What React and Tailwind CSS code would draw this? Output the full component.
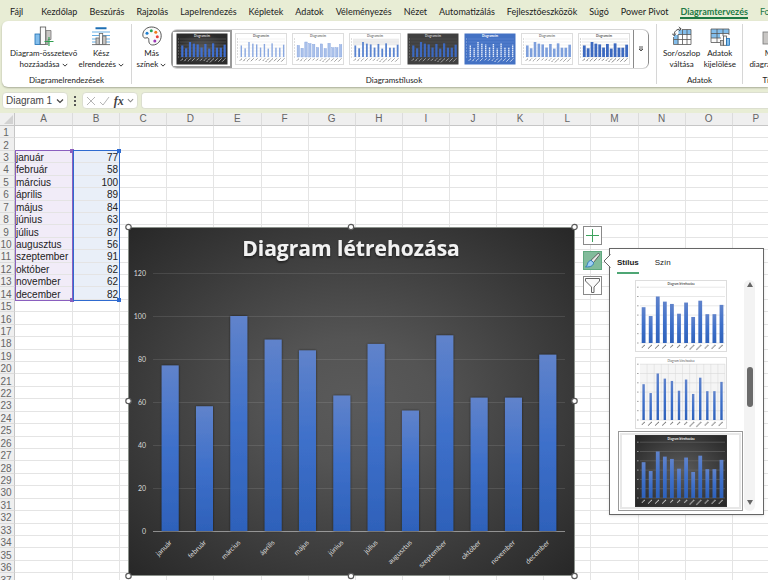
import React from 'react'
import { useState } from 'react'
import clsx from 'clsx'

const data = [
  ['január', 77],
  ['február', 58],
  ['március', 100],
  ['április', 89],
  ['május', 84],
  ['június', 63],
  ['július', 87],
  ['augusztus', 56],
  ['szeptember', 91],
  ['október', 62],
  ['november', 62],
  ['december', 82],
]

const tabs = [
  'Fájl',
  'Kezdőlap',
  'Beszúrás',
  'Rajzolás',
  'Lapelrendezés',
  'Képletek',
  'Adatok',
  'Véleményezés',
  'Nézet',
  'Automatizálás',
  'Fejlesztőeszközök',
  'Súgó',
  'Power Pivot',
  'Diagramtervezés',
  'Formátum',
]

const columns = 'ABCDEFGHIJKLMNOP'.split('')
const rows = Array.from({ length: 37 }, (_, i) => i + 1)

const Chevron = ({ className }) => (
  <svg viewBox="0 0 8 8" className={clsx('inline-block shrink-0', className)} fill="none" stroke="currentColor" strokeWidth="1.2">
    <path d="M1 2.5 4 5.5 7 2.5" />
  </svg>
)

/* ---------- ribbon icons ---------- */

const AddElementIcon = () => (
  <svg viewBox="0 0 20 20" className="w-5 h-5" fill="none">
    <rect x="1" y="8" width="5" height="10.5" fill="#83beec" stroke="#1e6fb4" strokeWidth=".8" />
    <rect x="6.3" y="1" width="5.4" height="17.5" fill="#fafafa" stroke="#555" strokeWidth=".8" />
    <path d="M12 4.5h5v9h-3v5h-2z" fill="#c8c6c4" stroke="#777" strokeWidth=".8" />
    <path d="M15 11v9M10.5 15.5h9" stroke="#2f9e4f" strokeWidth="1.1" />
  </svg>
)

const QuickLayoutIcon = () => (
  <svg viewBox="0 0 20 20" className="w-5 h-5" fill="none">
    <path d="M4.5 2.2h11" stroke="#1e6fb4" strokeWidth="2" />
    <path d="M1 6h18M1 9.5h18M1 13h18M1 16h18" stroke="#69afe5" strokeWidth="1" />
    <path d="M1 18.6h18" stroke="#555" strokeWidth=".8" />
    <rect x="5" y="12" width="3.3" height="6.5" fill="#c8c6c4" stroke="#666" strokeWidth=".8" />
    <rect x="8.3" y="7.5" width="3.4" height="11" fill="#fafafa" stroke="#666" strokeWidth=".8" />
    <rect x="11.7" y="10" width="3.3" height="8.5" fill="#c8c6c4" stroke="#666" strokeWidth=".8" />
  </svg>
)

const PaletteIcon = () => (
  <svg viewBox="0 0 20 20" className="w-5 h-5" fill="none">
    <path
      d="M9.5 1C4.5 1 .8 4.6.8 8.8c0 2.4 1.4 3.6 3 3.2 1.8-.6 3-.2 3 1.6 0 1.6-.2 5.4 4 5.4 4.8 0 8.4-4.2 8.4-9.2C19.2 4.6 15 1 9.5 1z"
      fill="#fafafa"
      stroke="#444"
      strokeWidth=".9"
    />
    <circle cx="5" cy="7.3" r="1.5" fill="#1e7fd0" />
    <circle cx="9.3" cy="4.8" r="1.5" fill="#23a455" />
    <circle cx="13.8" cy="6.3" r="1.5" fill="#f07c1c" />
    <circle cx="15.3" cy="10.8" r="1.5" fill="#e8413a" />
    <circle cx="12.8" cy="15" r="1.5" fill="#9b35b5" />
  </svg>
)

const SwitchIcon = () => (
  <svg viewBox="0 0 20 20" className="w-5 h-5" fill="none">
    <rect x="2" y="9" width="4.5" height="9" fill="#83beec" />
    <rect x="6.5" y="4" width="12.5" height="4.5" fill="#83beec" />
    <path d="M10 3.5h9v15H1.5V11M1.5 13.5H19M6 8.5v10M10.5 3.5v15M15 3.5v15M6 8.5h13" stroke="#555" strokeWidth=".8" />
    <path d="M2 9.5c0-4 2.5-6.5 7-6.5" stroke="#444" strokeWidth="1" />
    <path d="M7 .8 9.2 3 7 5.2M0 7.5 2 9.6 4.2 7.5" stroke="#444" strokeWidth="1" />
  </svg>
)

const SelectDataIcon = () => (
  <svg viewBox="0 0 20 20" className="w-5 h-5" fill="none">
    <rect x="1" y="3" width="18" height="13" fill="#fafafa" />
    <path d="M1 3h18v4.5H10V12H1z" fill="#83beec" />
    <path d="M10 16.5H1V3h18v6M1 7.5h18M1 12h10M7 3v13.5M13 3v7" stroke="#555" strokeWidth=".8" />
    <rect x="10.5" y="14.5" width="3" height="4.8" fill="#c8c6c4" stroke="#666" strokeWidth=".8" />
    <rect x="13.5" y="10" width="3" height="9.3" fill="#fafafa" stroke="#555" strokeWidth=".8" />
    <rect x="16.5" y="12.5" width="3" height="6.8" fill="#83beec" stroke="#1e6fb4" strokeWidth=".8" />
  </svg>
)

const ChartTypeIcon = () => (
  <svg viewBox="0 0 20 20" className="w-5 h-5" fill="none">
    <rect x="1" y="6" width="6" height="12" fill="#c8c6c4" stroke="#777" strokeWidth=".8" />
    <rect x="7" y="2" width="6" height="16" fill="#fafafa" stroke="#555" strokeWidth=".8" />
    <rect x="13" y="9" width="6" height="9" fill="#83beec" stroke="#1e6fb4" strokeWidth=".8" />
  </svg>
)

const RibbonButton = ({ icon, top, bottom, menu, className }) => (
  <button className={clsx('flex flex-col items-center whitespace-nowrap', className)}>
    {icon}
    <span className="mt-[2px] leading-[11px]">{top}</span>
    <span className="leading-[11px] flex items-center gap-[2px]">
      {bottom}
      {menu && <Chevron className="w-[6px] h-[6px]" />}
    </span>
  </button>
)

const GroupLabel = ({ children }) => (
  <span className="h-[13px] leading-3 text-center whitespace-nowrap">{children}</span>
)

/* ---------- small charts ---------- */

const looks = {
  dark: { bg: 'url(#thumbDark)', bar: '#3f6fd0', text: '#ddd', grid: '#666' },
  thin: { bg: '#fff', bar: '#8aa8e0', text: '#666', grid: '#e4e4e4', barWidth: 1.4 },
  pale: { bg: '#fff', bar: '#a9c0ea', text: '#777', grid: '#fff', barWidth: 2.4, stroke: '#7f9fdd' },
  band: { bg: '#fff', bar: '#5a84d0', text: '#777', grid: '#e0e0e0', barWidth: 1.8, band: true },
  flatDark: { bg: '#404040', bar: '#3c69c0', text: '#ccc', grid: '#555' },
  blue: { bg: '#4472c4', bar: '#e3ebfa', text: '#fff', grid: '#6a90d8', barWidth: 1.4, dash: true },
  soft: { bg: '#fff', bar: '#7d9fdc', text: '#777', grid: '#e4e4e4', barWidth: 2.6 },
  bold: { bg: '#fff', bar: '#3c69c0', text: '#555', grid: '#ccc', barWidth: 2.8 },
}

const StyleThumb = ({ look }) => {
  const l = looks[look]
  const w = l.barWidth || 2.2
  return (
    <svg viewBox="0 0 52 32" className="block w-[52px] h-8" fontFamily="Lato, sans-serif">
      <defs>
        <radialGradient id="thumbDark">
          <stop offset="0" stopColor="#595959" />
          <stop offset="1" stopColor="#2b2b2b" />
        </radialGradient>
      </defs>
      <rect x=".5" y=".5" width="51" height="31" fill={l.bg} stroke="#ddd" strokeWidth={l.bg === '#fff' ? 1 : 0} />
      <text x="26" y="4" fontSize="3" fontWeight="bold" textAnchor="middle" fill={l.text}>
        Diagramcím
      </text>
      {l.band && <rect x="4" y="6" width="46" height="6" fill="#eee" />}
      {[0, 1, 2, 3, 4, 5, 6].map((i) => (
        <g key={i}>
          <path d={`M4 ${6 + i * 3}h46`} stroke={l.grid} strokeWidth=".5" />
          <path d={`M2 ${6 + i * 3}h1`} stroke={l.text} strokeWidth=".8" opacity=".6" />
        </g>
      ))}
      {data.map(([name, value], i) => {
        const x = 6.3 + i * 3.85
        const h = value * 0.15
        return (
          <g key={name}>
            {l.dash ? (
              <path d={`M${x} 24v${-h}`} stroke={l.bar} strokeWidth={w} strokeDasharray="1.4 .6" />
            ) : (
              <rect x={x - w / 2} y={24 - h} width={w} height={h} fill={l.bar} stroke={l.stroke || 'none'} strokeWidth=".4" />
            )}
            <path
              d={`M${x + 0.7} 25.5l${-name.length / 2.6} ${name.length / 2.6}`}
              stroke={l.text}
              strokeWidth=".9"
              strokeDasharray="1 .2"
            />
          </g>
        )
      })}
    </svg>
  )
}

const PanelThumb = ({ variant }) => {
  const dark = variant === 'dark'
  const hatch = variant === 'hatch'
  const barWidth = hatch ? 2.4 : 3.8
  const ink = dark ? '#eee' : '#555'
  return (
    <svg viewBox="0 0 92 72" className="block w-[92px] h-[72px]" fontFamily="Lato, sans-serif">
      <defs>
        <radialGradient id="panelDark" r=".7">
          <stop offset="0" stopColor="#5c5c5c" />
          <stop offset="1" stopColor="#262626" />
        </radialGradient>
        <linearGradient id="panelBar" x1="0" y1="0" x2="0" y2="1">
          <stop offset="0" stopColor="#6083cb" />
          <stop offset=".5" stopColor="#3e70ca" />
          <stop offset="1" stopColor="#2e61ba" />
        </linearGradient>
        <pattern id="panelHatch" width="2" height="2" patternUnits="userSpaceOnUse">
          <path d="M0 0l2 2M2 0 0 2" stroke="#dcdcdc" strokeWidth=".3" />
        </pattern>
      </defs>
      <rect x=".5" y=".5" width="91" height="71" fill={dark ? 'url(#panelDark)' : '#fff'} stroke={dark ? '#333' : '#ddd'} />
      <text x="46" y="4.5" fontSize="3" fontWeight={hatch ? 'normal' : 'bold'} textAnchor="middle" fill={ink}>
        Diagram létrehozása
      </text>
      {hatch && <rect x="5" y="7" width="85" height="56" fill="url(#panelHatch)" />}
      {[0, 1, 2, 3, 4, 5, 6].map((i) => (
        <g key={i}>
          <path d={`M5 ${63 - i * 9.3}h85`} stroke={dark ? '#6a6a6a' : '#d9d9d9'} strokeWidth=".6" />
          <path d={`M2 ${63 - i * 9.3}h1.6`} stroke={ink} strokeWidth=".9" opacity=".6" />
        </g>
      ))}
      {data.map(([name, value], i) => {
        const x = 8.6 + i * 7.08
        const h = value * 0.465
        return (
          <g key={name}>
            {hatch && <path d={`M${x + 3.5} 7v56`} stroke="#d9d9d9" strokeWidth=".5" />}
            <rect x={x - barWidth / 2} y={63 - h} width={barWidth} height={h} fill="url(#panelBar)" />
            <path
              d={`M${x + 1} 65l${-name.length / 2} ${name.length / 2}`}
              stroke={ink}
              strokeWidth="1.2"
              strokeDasharray="1 .4"
              opacity=".8"
            />
          </g>
        )
      })}
    </svg>
  )
}

/* ---------- main chart ---------- */

const handles = [
  [3.5, 3],
  [226, 3],
  [449.5, 3],
  [3.5, 177],
  [449.5, 177],
  [3.5, 352],
  [226, 352],
  [449.5, 352],
]

const Chart = () => {
  const pitch = 34.33
  return (
    <svg
      viewBox="0 0 452 354"
      className="absolute left-[125px] top-[111px] w-[452px] h-[354px] overflow-visible"
      fontFamily="Lato, sans-serif"
    >
      <defs>
        <radialGradient id="chartBg" cx=".5" cy=".5" r=".72">
          <stop offset="0" stopColor="#5a5a5a" />
          <stop offset=".25" stopColor="#545454" />
          <stop offset="1" stopColor="#262626" />
        </radialGradient>
        <linearGradient id="barFill" x1="0" y1="0" x2="0" y2="1">
          <stop offset="0" stopColor="#6083cb" />
          <stop offset=".5" stopColor="#3e70ca" />
          <stop offset="1" stopColor="#2e61ba" />
        </linearGradient>
        <filter id="barShadow" x="-30%" y="-5%" width="160%" height="110%">
          <feDropShadow dx="0" dy="0" stdDeviation="1.2" floodColor="#000" floodOpacity=".65" />
        </filter>
        <filter id="titleShadow">
          <feDropShadow dx="0" dy="1.5" stdDeviation="1" floodColor="#000" floodOpacity=".6" />
        </filter>
      </defs>
      <rect x="3.5" y="3.5" width="446" height="348" fill="url(#chartBg)" stroke="#8b918b" />
      <text
        x="226"
        y="32"
        fontSize="21"
        fontWeight="bold"
        fontFamily="Open Sans, sans-serif"
        textAnchor="middle"
        fill="#f2f2f2"
        filter="url(#titleShadow)"
      >
        Diagram létrehozása
      </text>
      {[0, 20, 40, 60, 80, 100, 120].map((v) => {
        const y = 307 - v * 2.15
        return (
          <g key={v}>
            <path d={`M28 ${Math.round(y) + 0.5}h412`} stroke="#fff" opacity={v === 0 ? 0.45 : 0.1} />
            <text x="21" y={y + 3} fontSize="7" textAnchor="end" fill="#d9d9d9">
              {v}
            </text>
          </g>
        )
      })}
      {data.map(([name, value], i) => {
        const x = 28 + pitch * (i + 0.5)
        return (
          <g key={name}>
            <rect x={x - 8.5} y={307 - value * 2.15} width="17" height={value * 2.15} fill="url(#barFill)" filter="url(#barShadow)" />
            <text transform={`translate(${x + 2} 319) rotate(-45)`} fontSize="7" textAnchor="end" fill="#d9d9d9">
              {name}
            </text>
          </g>
        )
      })}
      {handles.map(([cx, cy]) => (
        <circle key={`${cx}-${cy}`} cx={cx} cy={cy} r="2.7" fill="#fff" stroke="#5a5a5a" strokeWidth="1.2" />
      ))}
    </svg>
  )
}

/* ---------- style panel ---------- */

const SideButtons = () => (
  <div className="absolute left-[583px] top-[113px] flex flex-col gap-[6px]">
    <button aria-label="Diagramösszetevők" className="w-[19px] h-[19px] border border-[#8a8a8a] bg-white">
      <svg viewBox="0 0 17 17" fill="none" stroke="#3da35d" strokeWidth="1">
        <path d="M8.5 2v13M2 8.5h13" />
      </svg>
    </button>
    <button aria-label="Diagramstílusok" className="w-[19px] h-[19px] border border-[#5fa97e] bg-[#82bb9b]">
      <svg viewBox="0 0 17 17" fill="none">
        <path d="M14 1.500c1.200-.4 2 .6 1.300 1.700L9.500 10.500 7 8.300z" fill="#e8e8e8" stroke="#444" strokeWidth=".8" />
        <path d="M7 8.300 9.500 10.500c.3 2.500-2.500 5-8 4.300 2-.8 1.600-2 2.300-3.800.6-1.500 2-2.500 3.200-2.700z" fill="#9fd0f5" stroke="#1e6fb4" strokeWidth=".8" />
      </svg>
    </button>
    <button aria-label="Diagramszűrők" className="w-[19px] h-[19px] border border-[#8a8a8a] bg-white">
      <svg viewBox="0 0 17 17" fill="none" stroke="#666" strokeWidth="1">
        <path d="M1.5 1.5h14V4L10 10v5.5H7.500V10L1.500 4z" fill="#fafafa" />
      </svg>
    </button>
  </div>
)

const StylePanel = () => {
  const [tab, setTab] = useState('Stílus')

  return (
    <div className="absolute left-[609px] top-[135px] w-[155px] border border-[#666] bg-white shadow-sm pb-[3px]">
      <svg viewBox="0 0 8 14" className="absolute -left-[7px] top-[5px] w-2 h-[14px]">
        <path d="M8 0 1 7l7 7z" fill="#fff" />
        <path d="M7.5 .5 1 7l6.5 6.5" fill="none" stroke="#666" />
      </svg>
      <div className="flex gap-4 pl-[7px] pt-2">
        {['Stílus', 'Szín'].map((t) => (
          <button
            key={t}
            onClick={() => setTab(t)}
            className={clsx(
              'h-[17px] leading-3 pb-1 border-b-2 text-[8px] text-[#222]',
              tab === t ? 'border-[#4ea674] font-bold' : 'border-transparent'
            )}
          >
            {t}
          </button>
        ))}
      </div>
      <div className="flex pl-2 pt-[6px]">
        <div className="w-[125px] flex flex-col items-center gap-[5px]">
          <button aria-label="1. stílus">
            <PanelThumb variant="light" />
          </button>
          <button aria-label="2. stílus">
            <PanelThumb variant="hatch" />
          </button>
          <button aria-label="3. stílus" className="w-full -mt-[3px] border border-[#999] p-px">
            <span className="flex justify-center border-2 border-[#e8e8e8]">
              <PanelThumb variant="dark" />
            </span>
          </button>
        </div>
        <div className="w-[11px] ml-px bg-[#f3f3f3] rounded-full flex flex-col items-center py-[2px] text-[#666]">
          <svg viewBox="0 0 6 5" className="w-[6px] h-[5px]" fill="currentColor">
            <path d="M3 0 6 5H0z" />
          </svg>
          <div className="w-[6px] h-10 mt-20 mb-auto rounded-full bg-[#6b6b6b]" />
          <svg viewBox="0 0 6 5" className="w-[6px] h-[5px] mb-1" fill="currentColor">
            <path d="M3 5 6 0H0z" />
          </svg>
        </div>
      </div>
    </div>
  )
}

/* ---------- sheet ---------- */

const Sheet = () => (
  <div className="relative bg-white text-[10px] text-[#222] font-['Liberation_Sans',sans-serif]">
    <table className="table-fixed w-[780px] h-[473px] border-separate border-spacing-0">
      <colgroup>
        <col className="w-[15px]" />
        <col className="w-[58px]" />
      </colgroup>
      <thead>
        <tr className="h-[13px] bg-[#efefef] text-[#666]">
          <th className="p-0 border-b border-r border-[#c6c6c6]">
            <svg viewBox="0 0 14 12" className="block w-[14px] h-3">
              <path d="M13 2v9H4z" fill="#d2d2d2" />
            </svg>
          </th>
          {columns.map((c) => (
            <th key={c} className="p-0 font-normal leading-3 border-b border-r border-[#c6c6c6] border-r-[#dcdcdc]">
              {c}
            </th>
          ))}
        </tr>
      </thead>
      <tbody>
        {rows.map((r) => {
          const record = data[r - 3]
          return (
            <tr key={r}>
              <th className="p-0 pt-[2px] font-normal leading-[9px] whitespace-nowrap text-[#666] bg-[#efefef] border-b border-r border-[#dcdcdc] border-r-[#c6c6c6]">
                <span className="flex justify-center -ml-[6px] -mr-1">{r}</span>
              </th>
              {columns.map((c) => (
                <td
                  key={c}
                  className={clsx(
                    'p-0 pt-[2px] leading-[9px] border-b border-r border-[#e4e4e4]',
                    record && c === 'A' && 'bg-[#f1ecf8] pl-px',
                    record && c === 'B' && 'bg-[#e9eff8] text-right pr-px'
                  )}
                >
                  {record && c === 'A' && record[0]}
                  {record && c === 'B' && record[1]}
                </td>
              ))}
            </tr>
          )
        })}
      </tbody>
    </table>

    {/* source range frames */}
    <div className="absolute left-[15px] top-[37px] w-[58px] h-[151px] border border-[#8a5fbf]">
      <i className="absolute -right-[2px] -top-[2px] w-1 h-1 bg-[#8a5fbf]" />
      <i className="absolute -right-[2px] -bottom-[2px] w-1 h-1 bg-[#8a5fbf]" />
    </div>
    <div className="absolute left-[73px] top-[37px] w-[47px] h-[151px] border border-[#2f6bd0]">
      <i className="absolute -right-[2px] -top-[2px] w-1 h-1 bg-[#2f6bd0]" />
      <i className="absolute -right-[2px] -bottom-[2px] w-1 h-1 bg-[#2f6bd0]" />
    </div>

    <Chart />
    <SideButtons />
    <StylePanel />
  </div>
)

const Ribbon = () => (
  <div className="ml-[2px] h-[66px] rounded-l-md bg-white shadow-[0_1px_2px_#a9ad98] flex text-[8px] text-[#222] overflow-hidden">
    <div className="w-[129px] shrink-0 flex flex-col justify-between pt-[5px]">
      <div className="flex justify-between pl-2 pr-[7px]">
        <RibbonButton icon={<AddElementIcon />} top="Diagram-összetevő" bottom="hozzáadása" menu />
        <RibbonButton icon={<QuickLayoutIcon />} top="Kész" bottom="elrendezés" menu />
      </div>
      <GroupLabel>Diagramelrendezések</GroupLabel>
    </div>
    <div className="my-[3px] w-px shrink-0 bg-[#d6d6d6]" />
    <div className="w-[524px] shrink-0 flex flex-col justify-between">
      <div className="flex">
        <RibbonButton icon={<PaletteIcon />} top="Más" bottom="színek" menu className="w-[39px] pt-[5px]" />
        <div className="mt-2 h-10 w-[478px] border-y border-[#d6d6d6] rounded-md flex items-center overflow-hidden">
          {Object.keys(looks).map((look, i) => (
            <button
              key={look}
              aria-label={`Stílus ${i + 1}`}
              className={clsx('w-0 flex-1 h-[38px] flex items-center justify-center', i === 0 && 'border-2 border-[#9a9a9a]')}
            >
              <StyleThumb look={look} />
            </button>
          ))}
          <button aria-label="Egyebek" className="w-4 h-10 shrink-0 border border-[#8a8a8a] rounded-r-md bg-white flex items-center justify-center">
            <svg viewBox="0 0 6 6" className="w-[6px] h-[6px]" fill="none" stroke="#444" strokeWidth=".9">
              <path d="M1 1h4M1 3l2 2 2-2z" />
            </svg>
          </button>
        </div>
      </div>
      <GroupLabel>Diagramstílusok</GroupLabel>
    </div>
    <div className="my-[3px] w-px shrink-0 bg-[#d6d6d6]" />
    <div className="w-[85px] shrink-0 flex flex-col justify-between pt-[5px]">
      <div className="flex justify-between px-[6px]">
        <RibbonButton icon={<SwitchIcon />} top="Sor/oszlop" bottom="váltása" />
        <RibbonButton icon={<SelectDataIcon />} top="Adatok" bottom="kijelölése" />
      </div>
      <GroupLabel>Adatok</GroupLabel>
    </div>
    <div className="my-[3px] w-px shrink-0 bg-[#d6d6d6]" />
    <div className="w-[58px] shrink-0 flex flex-col justify-between pt-[5px]">
      <RibbonButton icon={<ChartTypeIcon />} top="Más" bottom="diagramtípus" />
      <GroupLabel>Típus</GroupLabel>
    </div>
  </div>
)

const App = () => {
  const [active, setActive] = useState('Diagramtervezés')

  return (
    <div className="h-screen overflow-hidden bg-[#e8edd5] font-['Lato',sans-serif]">
      <nav className="h-[21px] pl-[10px] flex items-start gap-3 text-[9px] text-[#222] overflow-hidden">
        {tabs.map((t) => (
          <button
            key={t}
            onClick={() => setActive(t)}
            className={clsx(
              'h-[19px] pt-1 leading-[15px] whitespace-nowrap border-b-2 first:mr-[6px]',
              t === active ? 'border-[#1e7a45] text-[#1e7a45] font-bold' : 'border-transparent',
              t === 'Formátum' && 'text-[#1e7a45]'
            )}
          >
            {t}
          </button>
        ))}
      </nav>

      <Ribbon />

      <div className="flex items-center pt-[5px] pb-1 pl-[2px] font-['Liberation_Sans',sans-serif]">
        <div className="w-[66px] h-[17px] flex items-center justify-between rounded bg-white border border-[#dcdfd0] px-[3px] text-[#444]">
          <input aria-label="Név mező" defaultValue="Diagram 1" className="w-[50px] text-[10px] leading-3 outline-none" />
          <Chevron className="w-2 h-2" />
        </div>
        <span className="w-[14px] flex flex-col items-center gap-[2px]">
          <i className="w-[2px] h-[2px] bg-[#555]" />
          <i className="w-[2px] h-[2px] bg-[#555]" />
          <i className="w-[2px] h-[2px] bg-[#555]" />
        </span>
        <div className="w-[56px] h-[17px] flex items-center justify-between rounded bg-white border border-[#dcdfd0] px-[3px]">
          <button aria-label="Mégse">
            <svg viewBox="0 0 10 10" className="w-[10px] h-[10px]" stroke="#b5b5b5" fill="none">
              <path d="M1 1l8 8M9 1 1 9" />
            </svg>
          </button>
          <button aria-label="Beírás">
            <svg viewBox="0 0 11 10" className="w-[11px] h-[10px]" stroke="#b5b5b5" fill="none">
              <path d="M1 6l3 3 6-8" />
            </svg>
          </button>
          <button className="font-['Liberation_Serif',serif] italic font-bold text-[12px] leading-3 text-[#444]">fx</button>
          <Chevron className="w-[7px] h-[7px] text-[#888]" />
        </div>
        <input aria-label="Szerkesztőléc" className="ml-[3px] flex-1 h-[17px] rounded-l bg-white border border-r-0 border-[#dcdfd0] outline-none" />
      </div>

      <Sheet />
    </div>
  )
}

export default App
